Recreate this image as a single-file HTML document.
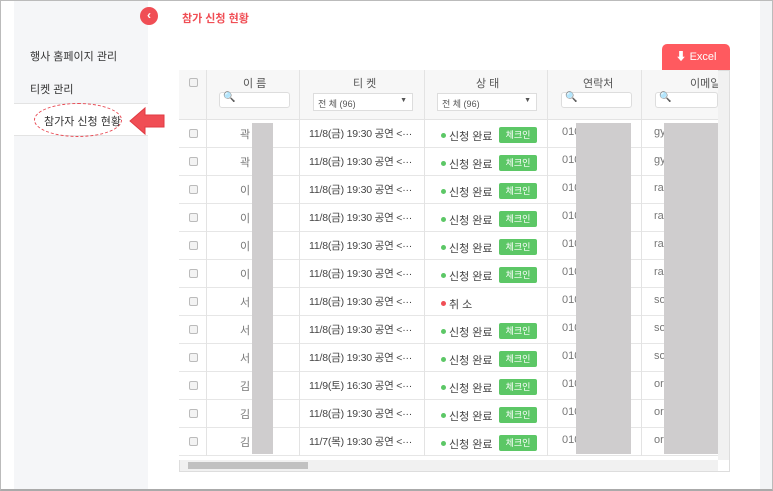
<!DOCTYPE html>
<html><head><meta charset="utf-8"><style>
*{margin:0;padding:0;box-sizing:border-box}
body{width:773px;height:491px;position:relative;overflow:hidden;background:#fff;font-family:"Liberation Sans","Noto Sans CJK KR",sans-serif;font-size:11px;color:#555}
.a{position:absolute}
.frame{left:0;top:0;width:773px;height:491px;border:1px solid #bbb;border-bottom:2px solid #aaa}
.side{left:14px;top:0;width:134px;height:489px;background:#f5f6f8}
.menu{left:30px;color:#333;font-size:11px}
.cell{position:absolute;border-right:1px solid #e3e3e3}
.row{position:absolute;left:179px;width:539px;height:28px;border-bottom:1px solid #e6e6e6;background:#fff}
.row span{position:absolute;top:6px;white-space:nowrap}
.cb{position:absolute;width:9px;height:9px;border:1px solid #bbb;border-radius:2px;background:#f3f3f3}
.btn{position:absolute;left:320px;top:7px;width:38px;height:16px;background:#5cc766;color:#fff;font-size:9px;text-align:center;line-height:16px;border-radius:2px}
.dot{position:absolute;left:262px;top:13px;width:5px;height:5px;border-radius:50%;background:#5cc766}
.gray{background:#cfcdce}
.inp{position:absolute;height:16px;border:1px solid #ddd;border-radius:3px;background:#fff}
</style></head><body>
<div class="a side"></div>
<div class="a frame"></div>
<div class="a" style="left:760px;top:1px;width:12px;height:488px;background:#f3f4f6"></div>
<div class="a" style="left:140px;top:7px;width:18px;height:18px;border-radius:50%;background:#f04e55;color:#fff;font-size:12px;font-weight:bold;text-align:center;line-height:17px">‹</div>
<div class="a" style="left:182px;top:10px;color:#f04e55;font-size:11px;font-weight:bold">참가 신청 현황</div>
<div class="a menu" style="top:48px">행사 홈페이지 관리</div>
<div class="a menu" style="top:81px">티켓 관리</div>
<div class="a" style="left:14px;top:103px;width:134px;height:33px;background:#fff;border-top:1px solid #e3e3e3;border-bottom:1px solid #e3e3e3"></div>
<div class="a" style="left:34px;top:103px;width:88px;height:34px;border:1px dashed #e84b55;border-radius:50%"></div>
<div class="a menu" style="top:113px;left:44px">참가자 신청 현황</div>
<svg class="a" style="left:127px;top:105px" width="40" height="32"><path d="M3 16 L18 3 L18 10 L37 10 L37 22 L18 22 L18 29 Z" fill="#f04e55" stroke="#e03a42"/></svg>
<div class="a" style="left:662px;top:44px;width:68px;height:26px;background:#ff5a5f;border-radius:5px 5px 0 0;color:#fff;font-size:11px;line-height:26px;text-align:center">⬇ Excel</div>
<div class="a" style="left:179px;top:70px;width:551px;height:402px;border:1px solid #ddd;background:#fff"></div>
<div class="a" style="left:179px;top:70px;width:539px;height:50px;background:#f7f7f7;border-bottom:1px solid #e3e3e3"></div>
<div class="cell" style="left:179px;top:70px;width:28px;height:386px"></div>
<div class="cell" style="left:207px;top:70px;width:93px;height:386px"></div>
<div class="cell" style="left:300px;top:70px;width:125px;height:386px"></div>
<div class="cell" style="left:425px;top:70px;width:123px;height:386px"></div>
<div class="cell" style="left:548px;top:70px;width:94px;height:386px"></div>
<div class="cb" style="left:189px;top:78px"></div>
<div class="a" style="left:243px;top:75px">이 름</div>
<div class="a" style="left:353px;top:75px">티 켓</div>
<div class="a" style="left:476px;top:75px">상 태</div>
<div class="a" style="left:583px;top:75px">연락처</div>
<div class="a" style="left:690px;top:75px">이메일</div>
<div class="inp" style="left:219px;top:92px;width:71px"><span style="position:absolute;left:3px;top:-1px;font-size:10px">🔍</span></div>
<div class="inp" style="left:313px;top:93px;width:100px;height:18px;border-radius:0;font-size:9px;padding:3px 4px">전 체 (96)<span style="position:absolute;right:5px;font-size:7px">▼</span></div>
<div class="inp" style="left:437px;top:93px;width:100px;height:18px;border-radius:0;font-size:9px;padding:3px 4px">전 체 (96)<span style="position:absolute;right:5px;font-size:7px">▼</span></div>
<div class="inp" style="left:561px;top:92px;width:71px"><span style="position:absolute;left:3px;top:-1px;font-size:10px">🔍</span></div>
<div class="inp" style="left:655px;top:92px;width:63px"><span style="position:absolute;left:3px;top:-1px;font-size:10px">🔍</span></div>
<div id="rows"></div>
<script>
var d=[["곽","11/8(금) 19:30","010","gy",1],["곽","11/8(금) 19:30","010","gy",1],["이","11/8(금) 19:30","010","rai",1],["이","11/8(금) 19:30","010","rai",1],["이","11/8(금) 19:30","010","rai",1],["이","11/8(금) 19:30","010","rai",1],["서","11/8(금) 19:30","010","so",0],["서","11/8(금) 19:30","010","so",1],["서","11/8(금) 19:30","010","so",1],["김","11/9(토) 16:30","010","or",1],["김","11/8(금) 19:30","010","or",1],["김","11/7(목) 19:30","010","or",1]];
var h="";
d.forEach(function(r,i){var t=120+i*28;
h+='<div class="row" style="top:'+t+'px"><div class="cb" style="left:10px;top:9px"></div>'+
'<span style="left:61px;color:#777">'+r[0]+'</span><span style="left:130px;color:#444;font-size:10.5px;letter-spacing:-0.2px">'+r[1]+' 공연 &lt;···</span>'+
(r[4]?'<div class="dot"></div><span style="left:270px;top:8px;color:#444">신청 완료</span><div class="btn">체크인</div>':'<div class="dot" style="background:#f04e55"></div><span style="left:270px;top:8px;color:#444">취 소</span>')+
'<span style="left:383px;color:#777">'+r[2]+'</span><span style="left:475px;color:#777">'+r[3]+'</span></div>';});
h+='<div class="row" style="top:456px;height:4px;border:none"></div>';
document.getElementById("rows").innerHTML=h;
</script>
<div class="a" style="left:207px;top:120px;width:93px;height:336px;border-right:1px solid #e3e3e3"></div>
<div class="a" style="left:300px;top:120px;width:125px;height:336px;border-right:1px solid #e3e3e3"></div>
<div class="a" style="left:425px;top:120px;width:123px;height:336px;border-right:1px solid #e3e3e3"></div>
<div class="a" style="left:548px;top:120px;width:94px;height:336px;border-right:1px solid #e3e3e3"></div>
<div class="a" style="left:179px;top:120px;width:28px;height:336px;border-right:1px solid #e3e3e3"></div>
<div class="a gray" style="left:252px;top:123px;width:21px;height:331px"></div>
<div class="a gray" style="left:576px;top:123px;width:55px;height:331px"></div>
<div class="a gray" style="left:664px;top:123px;width:54px;height:331px"></div>
<div class="a" style="left:718px;top:71px;width:11px;height:389px;background:#f1f1f1"></div>
<div class="a" style="left:180px;top:460px;width:538px;height:11px;background:#f1f1f1"></div>
<div class="a" style="left:188px;top:462px;width:120px;height:7px;background:#c1c1c1"></div>
</body></html>
